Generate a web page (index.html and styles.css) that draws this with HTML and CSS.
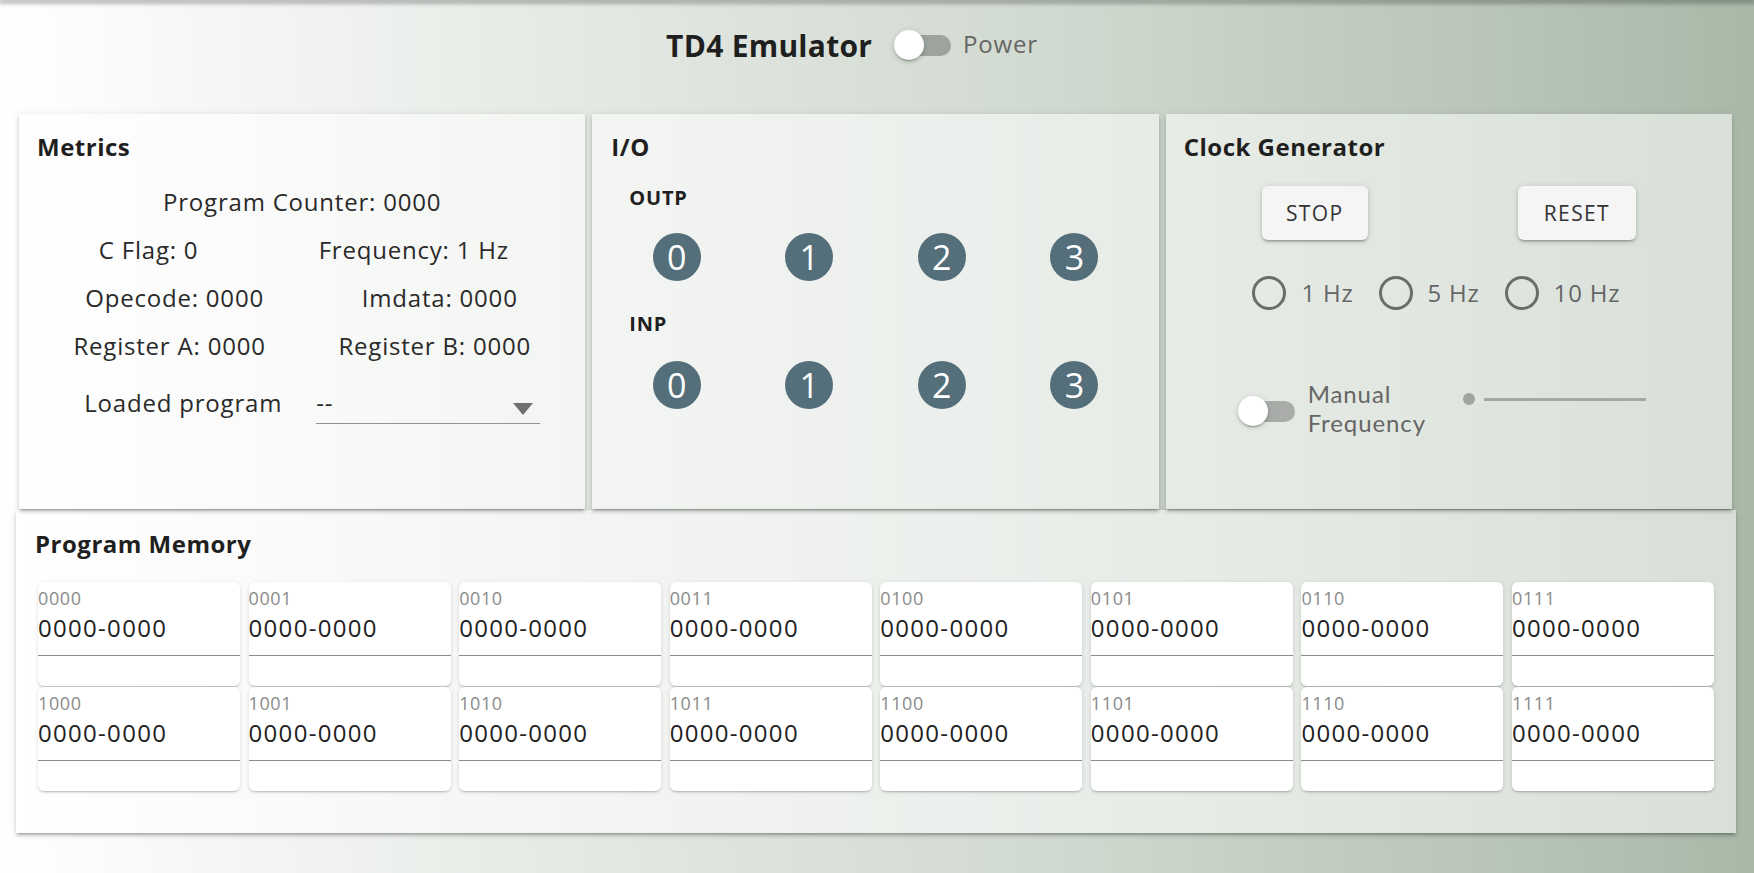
FILE: index.html
```html
<!DOCTYPE html>
<html lang="en">
<head>
<meta charset="utf-8">
<title>TD4 Emulator</title>
<link rel="stylesheet" href="styles.css">
</head>
<body>
<div class="topbar"></div>
<header class="header">
  <h1 class="app-title">TD4 Emulator</h1>
  <div class="switch power-switch"><div class="track"><div class="thumb"></div></div></div>
  <span class="switch-label">Power</span>
</header>

<section class="top-row">
  <div class="card">
    <h2 class="card-title">Metrics</h2>
    <div class="metric-full">Program Counter: 0000</div>
    <div class="metric-row shift-left"><span>C Flag: 0</span><span>Frequency: 1 Hz</span></div>
    <div class="metric-row shift-right"><span>Opecode: 0000</span><span>Imdata: 0000</span></div>
    <div class="metric-row"><span>Register A: 0000</span><span>Register B: 0000</span></div>
    <div class="loaded-row">
      <span class="loaded-label">Loaded program</span>
      <div class="select">
        <span class="select-value">--</span>
        <svg class="select-arrow" width="20" height="12" viewBox="0 0 20 12"><path d="M0 0 L20 0 L10 12 Z" fill="#6f6f6f"/></svg>
      </div>
    </div>
  </div>

  <div class="card">
    <h2 class="card-title io-title">I/O</h2>
    <div class="io-label">OUTP</div>
    <div class="bits">
      <div class="bit-cell"><span class="bit">0</span></div>
      <div class="bit-cell"><span class="bit">1</span></div>
      <div class="bit-cell"><span class="bit">2</span></div>
      <div class="bit-cell"><span class="bit">3</span></div>
    </div>
    <div class="io-label inp-label">INP</div>
    <div class="bits inp-bits">
      <div class="bit-cell"><span class="bit">0</span></div>
      <div class="bit-cell"><span class="bit">1</span></div>
      <div class="bit-cell"><span class="bit">2</span></div>
      <div class="bit-cell"><span class="bit">3</span></div>
    </div>
  </div>

  <div class="card">
    <h2 class="card-title">Clock Generator</h2>
    <div class="buttons">
      <button class="btn btn-stop">STOP</button>
      <button class="btn btn-reset">RESET</button>
    </div>
    <div class="radios">
      <label class="radio"><span class="radio-ring"></span><span class="radio-text">1 Hz</span></label>
      <label class="radio"><span class="radio-ring"></span><span class="radio-text">5 Hz</span></label>
      <label class="radio"><span class="radio-ring"></span><span class="radio-text">10 Hz</span></label>
    </div>
    <div class="manual-row">
      <div class="manual-left">
        <div class="switch manual-switch"><div class="track"><div class="thumb"></div></div></div>
        <div class="manual-label"><span class="manual-line">Manual</span><span class="manual-line">Frequency</span></div>
      </div>
      <div class="slider">
        <span class="slider-dot"></span>
        <span class="slider-line"></span>
      </div>
    </div>
  </div>
</section>

<section class="memory-card">
  <h2 class="card-title memory-title">Program Memory</h2>
  <div class="memory-grid">
    <div class="cell"><div class="cell-label">0000</div><div class="cell-value">0000-0000</div><div class="cell-line"></div></div>
    <div class="cell"><div class="cell-label">0001</div><div class="cell-value">0000-0000</div><div class="cell-line"></div></div>
    <div class="cell"><div class="cell-label">0010</div><div class="cell-value">0000-0000</div><div class="cell-line"></div></div>
    <div class="cell"><div class="cell-label">0011</div><div class="cell-value">0000-0000</div><div class="cell-line"></div></div>
    <div class="cell"><div class="cell-label">0100</div><div class="cell-value">0000-0000</div><div class="cell-line"></div></div>
    <div class="cell"><div class="cell-label">0101</div><div class="cell-value">0000-0000</div><div class="cell-line"></div></div>
    <div class="cell"><div class="cell-label">0110</div><div class="cell-value">0000-0000</div><div class="cell-line"></div></div>
    <div class="cell"><div class="cell-label">0111</div><div class="cell-value">0000-0000</div><div class="cell-line"></div></div>
    <div class="cell"><div class="cell-label">1000</div><div class="cell-value">0000-0000</div><div class="cell-line"></div></div>
    <div class="cell"><div class="cell-label">1001</div><div class="cell-value">0000-0000</div><div class="cell-line"></div></div>
    <div class="cell"><div class="cell-label">1010</div><div class="cell-value">0000-0000</div><div class="cell-line"></div></div>
    <div class="cell"><div class="cell-label">1011</div><div class="cell-value">0000-0000</div><div class="cell-line"></div></div>
    <div class="cell"><div class="cell-label">1100</div><div class="cell-value">0000-0000</div><div class="cell-line"></div></div>
    <div class="cell"><div class="cell-label">1101</div><div class="cell-value">0000-0000</div><div class="cell-line"></div></div>
    <div class="cell"><div class="cell-label">1110</div><div class="cell-value">0000-0000</div><div class="cell-line"></div></div>
    <div class="cell"><div class="cell-label">1111</div><div class="cell-value">0000-0000</div><div class="cell-line"></div></div>
  </div>
</section>
</body>
</html>
```

FILE: styles.css
```css
* { box-sizing: border-box; }

html, body {
  margin: 0;
  padding: 0;
  height: 100%;
}

body {
  width: 1754px;
  height: 873px;
  overflow: hidden;
  font-family: "Open Sans", "Noto Sans", sans-serif;
  font-size: 24px;
  letter-spacing: 0.8px;
  color: #2a2a2a;
  background: linear-gradient(to right, #ffffff 0%, #e3e8e2 35%, #cfd8ce 62%, #a9b9a8 100%);
}

.topbar {
  height: 0;
  box-shadow: 0 1px 5px 2px rgba(0, 0, 0, 0.38);
}

/* header */
.header {
  height: 92px;
  display: flex;
  align-items: center;
  justify-content: center;
  padding-right: 50px;
}

.app-title {
  margin: 0;
  font-size: 30px;
  line-height: 40px;
  font-weight: 700;
  letter-spacing: 0.25px;
  color: #1f1f1f;
}

.power-switch { margin-left: 22px; margin-top: -2px; }

.switch-label {
  margin-left: 12px;
  color: #666;
  line-height: 32px;
  margin-top: -4px;
}

/* switch */
.switch {
  width: 57px;
  height: 30px;
  display: flex;
  align-items: center;
  padding-left: 3px;
}

.track {
  width: 54px;
  height: 21px;
  border-radius: 11px;
  background: rgba(0, 0, 0, 0.26);
  display: flex;
  align-items: center;
}

.thumb {
  width: 30px;
  height: 30px;
  flex: none;
  margin-left: -3px;
  border-radius: 50%;
  background: #fff;
  box-shadow: 0 3px 1px -2px rgba(0,0,0,.2), 0 2px 3px 0 rgba(0,0,0,.14), 0 1px 7px 0 rgba(0,0,0,.12);
}

/* top cards */
.top-row {
  margin: 22px 0 0 19px;
  width: 1713px;
  display: grid;
  grid-template-columns: repeat(3, 1fr);
  column-gap: 7px;
}

.card {
  height: 395px;
  padding: 17px 18px;
  background: rgba(255, 255, 255, 0.55);
  box-shadow: 0 3px 2px -2px rgba(0,0,0,.2), 0 3px 3px 0 rgba(0,0,0,.14), 0 1px 7px 0 rgba(0,0,0,.12);
}

.card-title {
  margin: 0;
  font-size: 24px;
  line-height: 32px;
  font-weight: 700;
  letter-spacing: 0.5px;
  color: #1f1f1f;
}

/* metrics */
.metric-full {
  margin-top: 15px;
  line-height: 48px;
  text-align: center;
}

.metric-row {
  display: grid;
  grid-template-columns: 1fr 1fr;
  line-height: 48px;
  text-align: center;
}

.shift-left { margin: 0 21px 0 -21px; }
.shift-right { margin: 0 -5px 0 5px; }

.loaded-row {
  margin-top: 17px;
  display: grid;
  grid-template-columns: 1fr 1fr;
  align-items: start;
}

.loaded-label {
  line-height: 32px;
  text-align: right;
  padding-right: 20px;
}

.select {
  margin-left: 14px;
  width: 224px;
  height: 37px;
  border-bottom: 1px solid #939393;
  display: flex;
  justify-content: space-between;
  align-items: flex-start;
  padding-right: 7px;
}

.select-value { line-height: 32px; }

.select-arrow { margin-top: 16px; }

/* I/O */
.io-title { padding-left: 1px; }

.io-label {
  margin: 21px 0 0 19px;
  font-size: 20px;
  line-height: 28px;
  font-weight: 700;
  color: #1f1f1f;
}

.inp-label { margin-top: 29px; }

.bits {
  margin-top: 21px;
  display: grid;
  grid-template-columns: repeat(4, 1fr);
}

.inp-bits { margin-top: 23px; }

.bit-cell {
  display: flex;
  justify-content: center;
}

.bit {
  width: 48px;
  height: 48px;
  border-radius: 50%;
  background: #546e7a;
  color: #fff;
  font-size: 34px;
  line-height: 48px;
  letter-spacing: 0;
  text-align: center;
}

/* clock */
.buttons {
  margin-top: 23px;
  display: grid;
  grid-template-columns: 1fr 1fr;
  justify-items: center;
  padding-right: 6px;
}

.btn {
  height: 54px;
  padding: 0 24px;
  border: none;
  border-radius: 6px;
  background: #f5f5f5;
  font-family: "Open Sans", "Noto Sans", sans-serif;
  font-size: 21px;
  letter-spacing: 1.4px;
  color: #333;
  box-shadow: 0 3px 2px -2px rgba(0,0,0,.2), 0 2px 3px 0 rgba(0,0,0,.14), 0 1px 7px 0 rgba(0,0,0,.12);
}

.btn-reset { padding: 0 26px; }

.radios {
  margin-top: 35px;
  height: 36px;
  display: flex;
  justify-content: center;
  align-items: center;
}

.radio {
  display: flex;
  align-items: center;
  margin-right: 25px;
}

.radio-ring {
  width: 34px;
  height: 34px;
  border: 3px solid #6a6d6a;
  border-radius: 50%;
}

.radio-text {
  margin-left: 15px;
  color: #666;
  line-height: 32px;
}

.manual-row {
  margin-top: 68px;
  display: grid;
  grid-template-columns: 1fr 1fr;
  align-items: start;
}

.manual-left {
  display: flex;
  align-items: center;
  padding-left: 54px;
}

.manual-switch { margin-top: 6px; }

.manual-label {
  margin-left: 13px;
  display: flex;
  flex-direction: column;
  font-family: "Lato", "Open Sans", sans-serif;
  letter-spacing: 0.9px;
  color: #666;
}

.manual-line {
  height: 29px;
  line-height: 29px;
}

.slider {
  margin: 14px 0 0 14px;
  width: 183px;
  height: 12px;
  display: flex;
  align-items: center;
}

.slider-dot {
  width: 12px;
  height: 12px;
  border-radius: 50%;
  background: #9fa59f;
  flex: none;
}

.slider-line {
  margin-left: 9px;
  flex: 1;
  height: 3px;
  background: #a3aaa3;
}

/* memory */
.memory-card {
  margin: 1px 0 0 16px;
  width: 1720px;
  height: 323px;
  padding: 18px 22px 0 22px;
  background: rgba(255, 255, 255, 0.55);
  box-shadow: 0 3px 2px -2px rgba(0,0,0,.2), 0 3px 3px 0 rgba(0,0,0,.14), 0 1px 7px 0 rgba(0,0,0,.12);
}

.memory-title { margin-left: -3px; }

.memory-grid {
  margin-top: 22px;
  display: grid;
  grid-template-columns: repeat(8, 1fr);
  column-gap: 8.57px;
  row-gap: 1px;
}

.cell {
  height: 104px;
  padding-top: 5px;
  background: #fff;
  border-radius: 6px;
  box-shadow: 0 2px 2px -1px rgba(0,0,0,.2), 0 1px 4px 0 rgba(0,0,0,.12);
}

.cell-label {
  font-size: 18px;
  line-height: 22px;
  letter-spacing: 0.6px;
  color: #8a8a8a;
}

.cell-value {
  margin-top: 3px;
  line-height: 32px;
  letter-spacing: 1.3px;
  color: #222;
}

.cell-line {
  margin-top: 11px;
  border-top: 1px solid #8c8c8c;
}
```
